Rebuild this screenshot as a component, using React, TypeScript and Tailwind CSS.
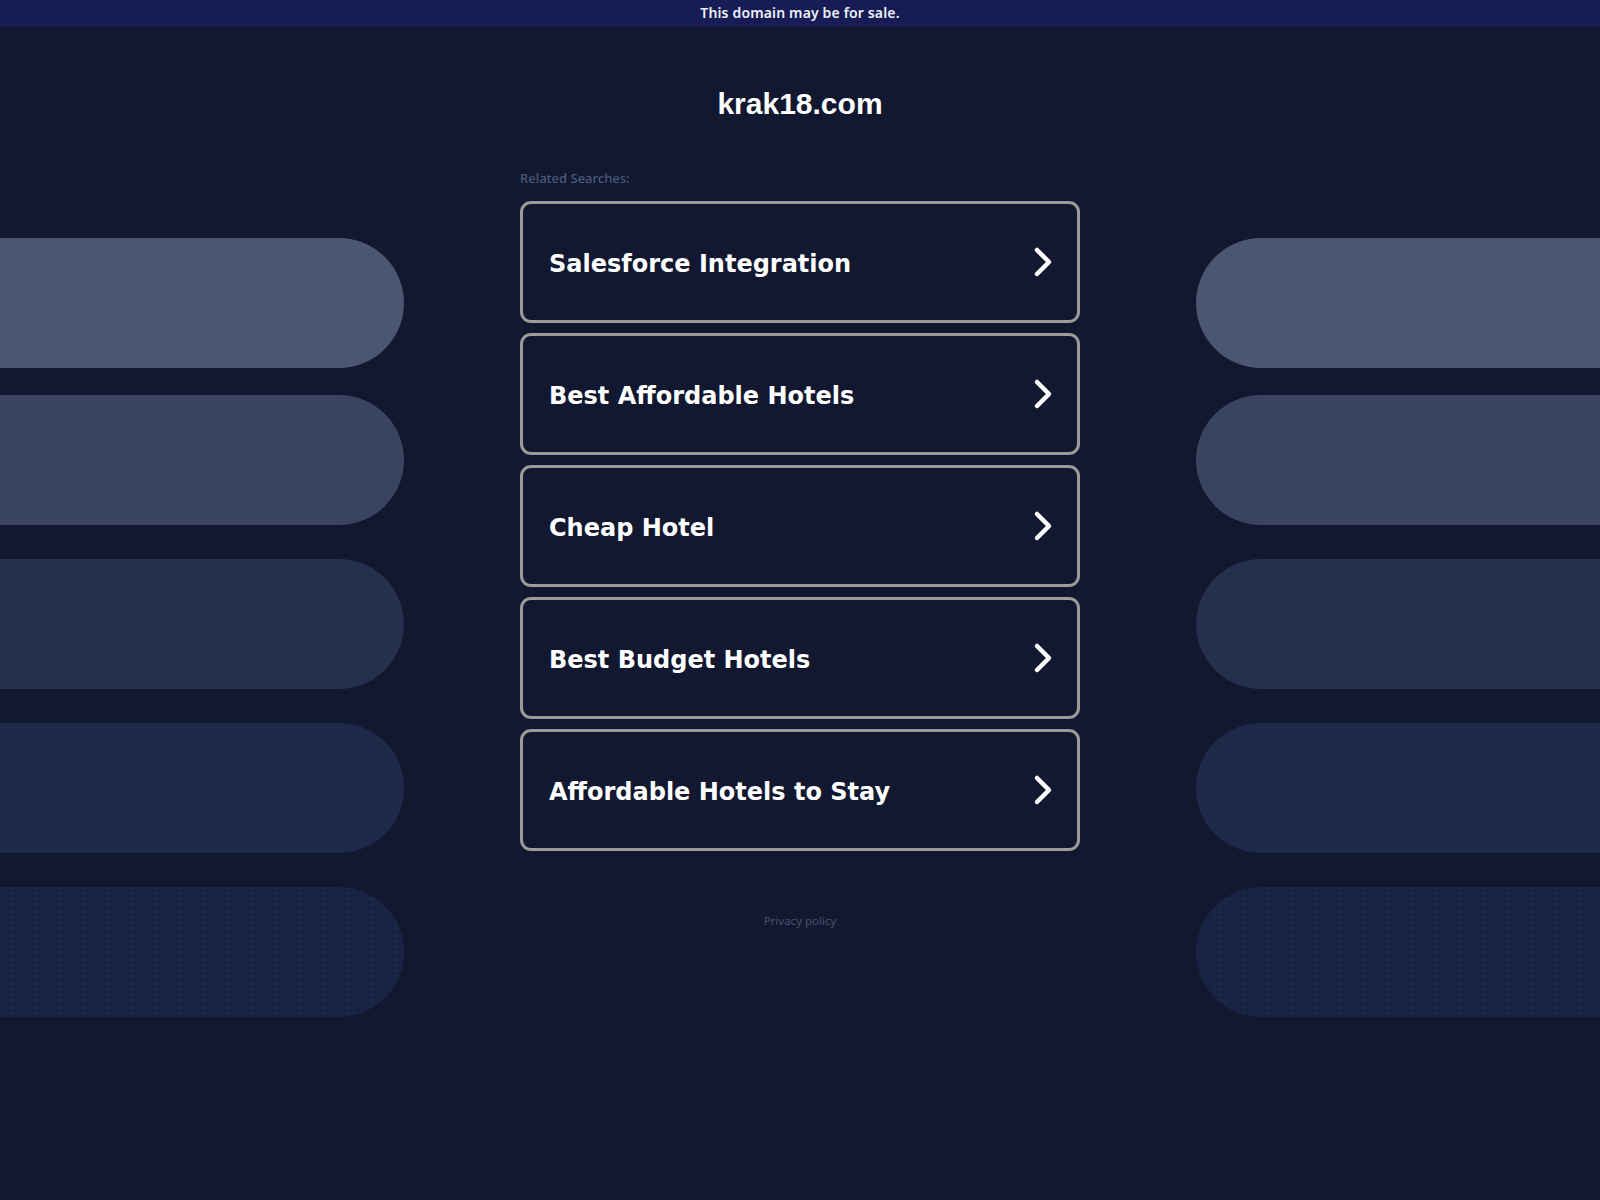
import React from "react";

const items = [
  "Salesforce Integration",
  "Best Affordable Hotels",
  "Cheap Hotel",
  "Best Budget Hotels",
  "Affordable Hotels to Stay",
];

function Chevron() {
  return (
    <svg width="20" height="32" viewBox="0 0 20 32" fill="none" className="shrink-0">
      <polyline
        points="4,4 16,16 4,28"
        stroke="#ffffff"
        strokeWidth="4.5"
        strokeLinecap="round"
        strokeLinejoin="round"
      />
    </svg>
  );
}

function Pills({ side }: { side: "left" | "right" }) {
  const round = side === "left" ? "rounded-r-full" : "rounded-l-full";
  return (
    <div className="flex flex-col pt-[211px]">
      <div className={`h-[130px] bg-[#4c5672] ${round}`} />
      <div className={`mt-[27px] h-[130px] bg-[#3a4461] ${round}`} />
      <div className={`mt-[34px] h-[130px] bg-[#262f4d] ${round}`} />
      <div
        className={`mt-[34px] h-[130px] bg-[#1e2848] bg-[radial-gradient(circle,#222d52_0.7px,transparent_1px)] bg-[length:3px_3px] ${round}`}
      />
      <div
        className={`mt-[34px] h-[130px] bg-[#1a2445] bg-[radial-gradient(circle,#131c3b_0.9px,transparent_1.2px)] bg-[length:6px_6px] ${round}`}
      />
    </div>
  );
}

export default function App() {
  return (
    <div className="min-h-[1200px] w-full bg-[#111830] overflow-hidden">
      <div className="h-[27px] bg-[#171c55] flex items-center justify-center">
        <span className="-mt-[2px] text-[14px] font-semibold text-[#eef0f8] font-['Noto_Sans',sans-serif] tracking-[0.15px]">
          This domain may be for sale.
        </span>
      </div>
      <div className="flex">
        <div className="w-[404px] shrink-0">
          <Pills side="left" />
        </div>
        <div className="flex-1 flex justify-center">
          <div className="w-[560px] flex flex-col">
            <h1 className="mt-[59px] h-[36px] leading-[36px] text-center text-[30px] font-bold text-white font-['Liberation_Sans',Arial,sans-serif]">
              krak18.com
            </h1>
            <div className="mt-[48px] h-[16px] leading-[16px] text-[13px] font-medium text-[#4c587b] font-['Noto_Sans',sans-serif]">
              Related Searches:
            </div>
            <div className="mt-[15px] flex flex-col gap-[10px]">
              {items.map((t) => (
                <a
                  key={t}
                  href="#"
                  className="h-[122px] rounded-[11px] border-[3px] border-[#9b9b9b] flex items-center justify-between pl-[26px] pr-[24px]"
                >
                  <span className="mt-[4px] text-[24px] font-bold text-white font-['DejaVu_Sans',Verdana,sans-serif]">
                    {t}
                  </span>
                  <Chevron />
                </a>
              ))}
            </div>
            <div className="mt-[62px] h-[16px] leading-[16px] text-center text-[11.5px] text-[#4a5270] font-['Noto_Sans',sans-serif]">
              Privacy policy
            </div>
          </div>
        </div>
        <div className="w-[404px] shrink-0">
          <Pills side="right" />
        </div>
      </div>
    </div>
  );
}
